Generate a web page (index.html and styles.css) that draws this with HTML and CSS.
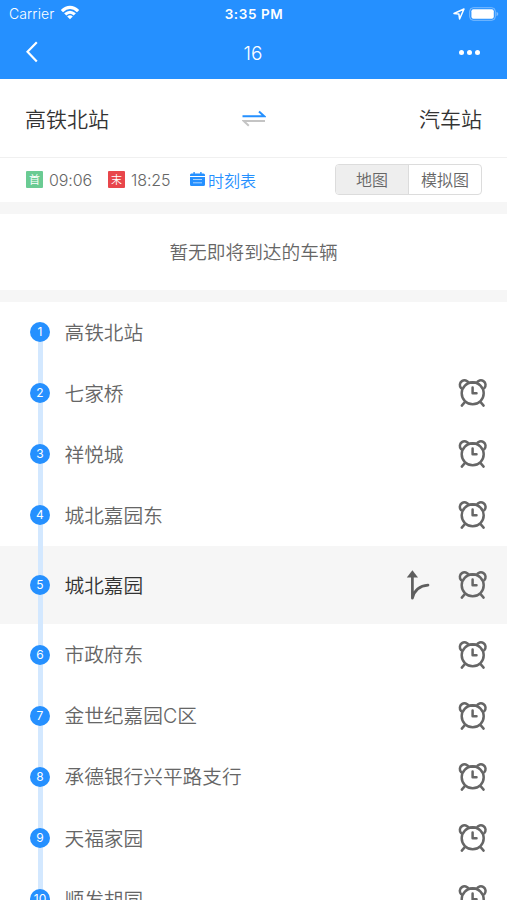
FILE: index.html
```html
<!DOCTYPE html>
<html lang="zh-CN">
<head>
<meta charset="UTF-8">
<meta name="viewport" content="width=device-width, initial-scale=1.0">
<title>16</title>
<link rel="stylesheet" href="styles.css">
</head>
<body>
<!-- shared icons -->
<svg class="sprite">
    <symbol id="clock" viewBox="0 0 30 30">
        <circle cx="14.7" cy="15.3" r="11"/>
        <path d="M3.1 10.2A4.7 4.7 0 1 1 10.8 5M18.6 5A4.7 4.7 0 1 1 26.3 10.2M10.5 4.7h8.4M14.6 9.4v5.9h3.9M6.6 24.4l-2.8 3.2M22.8 24.4l2.8 3.2"/>
    </symbol>
</svg>

<header class="header">
    <div class="status">
        <div class="status-left">
            <span>Carrier</span>
            <svg class="wifi" viewBox="0 0 20 15" width="20" height="15">
                <path d="M.8 5Q10-3.4 19.2 5L17 7.2Q10 1 3 7.2Z"/>
                <path d="M4.1 8.3Q10 3 15.9 8.3L13.7 10.4Q10 7.1 6.3 10.4Z"/>
                <path d="M7.2 11.4Q10 8.9 12.8 11.4L10 14.2Z"/>
            </svg>
        </div>
        <div class="status-time">3:35 PM</div>
        <div class="status-right">
            <svg class="location" viewBox="0 0 12 12" width="12" height="12"><path d="M1 5.5L11 1L6.6 11L5.9 6.1Z"/></svg>
            <svg viewBox="0 0 30 14" width="30" height="14">
                <rect x=".7" y=".7" width="25.6" height="12.6" rx="3.6" fill="none" stroke="#fff" stroke-opacity=".4"/>
                <rect x="2.4" y="2.3" width="22.4" height="9.4" rx="2" fill="#fff"/>
                <path d="M27.5 4.8q1.8.8 1.8 2.2t-1.8 2.2z" fill="#fff" opacity=".4"/>
            </svg>
        </div>
    </div>
    <div class="nav">
        <svg class="back" viewBox="0 0 12 22" width="12" height="22"><path d="M10.8 1.2L1.5 10.8L10.8 20.4"/></svg>
        <div class="nav-title">16</div>
        <div class="more"><i></i><i></i><i></i></div>
    </div>
</header>

<section class="route">
    <span class="route-from">高铁北站</span>
    <svg viewBox="0 0 24 18" width="24" height="18">
        <path d="M.5 7.3H22.2L17 2.5" stroke="#2590ff"/>
        <path d="M23 11.9H1.6L6.8 16.7" stroke="#c4c4c4"/>
    </svg>
    <span class="route-to">汽车站</span>
</section>

<section class="info">
    <span class="tag first">首</span><span class="time">09:06</span>
    <span class="tag last">末</span><span class="time">18:25</span>
    <a class="timetable">
        <svg viewBox="0 0 15 14" width="15" height="14">
            <path d="M1.5 1.5H13.5Q15 1.5 15 3V4H0V3Q0 1.5 1.5 1.5ZM3.4 0h1.4v2H3.4zM10.2 0h1.4v2h-1.4zM0 5H15V12.5Q15 14 13.5 14H1.5Q0 14 0 12.5Z"/>
            <path d="M3 7.5h9M3 10.8h9" stroke="#fff" stroke-opacity=".6"/>
        </svg><span>时刻表</span></a>
    <div class="switch">
        <span class="active">地图</span>
        <span>模拟图</span>
    </div>
</section>

<section class="notice">暂无即将到达的车辆</section>

<ul class="stops">
    <li><b class="num">1</b><span class="name">高铁北站</span></li>
    <li><b class="num">2</b><span class="name">七家桥</span><svg class="clock"><use href="#clock"/></svg></li>
    <li><b class="num">3</b><span class="name">祥悦城</span><svg class="clock"><use href="#clock"/></svg></li>
    <li><b class="num">4</b><span class="name">城北嘉园东</span><svg class="clock"><use href="#clock"/></svg></li>
    <li class="current"><b class="num">5</b><span class="name">城北嘉园</span>
        <svg class="branch" viewBox="0 0 24 30" width="24" height="30">
            <path d="M6.4 0.2L12 7.6H.8Z" fill="#5e5e5e"/>
            <path d="M6.4 6V28.2Q9.4 16.2 22 15.2"/>
        </svg>
        <svg class="clock"><use href="#clock"/></svg></li>
    <li><b class="num">6</b><span class="name">市政府东</span><svg class="clock"><use href="#clock"/></svg></li>
    <li><b class="num">7</b><span class="name">金世纪嘉园C区</span><svg class="clock"><use href="#clock"/></svg></li>
    <li><b class="num">8</b><span class="name">承德银行兴平路支行</span><svg class="clock"><use href="#clock"/></svg></li>
    <li><b class="num">9</b><span class="name">天福家园</span><svg class="clock"><use href="#clock"/></svg></li>
    <li><b class="num">10</b><span class="name">顺发胡同</span><svg class="clock"><use href="#clock"/></svg></li>
</ul>
</body>
</html>
```
FILE: styles.css
```css
:root{
    --blue:#2590ff;
    --line:#d3e8ff;
    --gray:#f6f6f6;
    --text:#666;
    --dark:#333;
}
*{
    box-sizing:border-box;
}
body{
    margin:0;
    height:900px;
    overflow:hidden;
    display:flex;
    flex-direction:column;
    background:#fff;
    color:var(--text);
    font-family:Inter, "Noto Sans CJK SC", sans-serif;
    font-weight:350;
}
.sprite{
    position:absolute;
    width:0;
    height:0;
}
.header{
    flex:none;
    height:79px;
    background:var(--blue);
    color:#fff;
}
.status{
    display:grid;
    grid-template-columns:1fr auto 1fr;
    align-items:center;
    height:27px;
    padding:0 8px 0 9px;
    font-size:14px;
}
.status-left{
    display:flex;
    align-items:center;
    gap:6px;
    letter-spacing:.1px;
}
.wifi{
    position:relative;
    top:-1px;
    fill:#fff;
}
.status-time{
    font-size:13.5px;
    font-weight:600;
    letter-spacing:.6px;
}
.status-right{
    display:flex;
    align-items:center;
    justify-content:flex-end;
    gap:4px;
}
.location{
    fill:none;
    stroke:#fff;
    stroke-width:1.5;
    stroke-linejoin:round;
}
.nav{
    display:grid;
    grid-template-columns:1fr auto 1fr;
    align-items:center;
    height:50px;
    padding:0 27px 0 26px;
}
.back{
    fill:none;
    stroke:#fff;
    stroke-width:2.2;
}
.nav-title{
    padding-top:2px;
    font-size:19px;
}
.more{
    display:flex;
    justify-content:flex-end;
    gap:3px;
}
.more i{
    width:5px;
    height:5px;
    border-radius:50%;
    background:#fff;
}
.route{
    flex:none;
    display:grid;
    grid-template-columns:1fr auto 1fr;
    align-items:center;
    height:79px;
    padding:0 25px;
    border-bottom:1px solid #f0f0f0;
    color:var(--dark);
    font-size:21px;
}
.route svg{
    fill:none;
    stroke-width:2;
}
.route-to{
    text-align:right;
}
.info{
    flex:none;
    display:flex;
    align-items:center;
    height:43.5px;
    padding:0 25px 0 26px;
    font-size:16px;
}
.tag{
    width:17px;
    height:17px;
    border-radius:1px;
    color:#fff;
    font-size:11px;
    line-height:19px;
    text-align:center;
}
.first{
    background:#6acb93;
}
.last{
    background:#e8464b;
}
.time{
    width:60px;
    padding-left:6px;
    letter-spacing:-.1px;
}
.time + .tag{
    margin-left:5px;
}
.last + .time{
    width:65px;
}
.timetable{
    display:flex;
    align-items:center;
    gap:3px;
    color:var(--blue);
}
.timetable svg{
    margin-bottom:2px;
    fill:var(--blue);
}
.switch{
    display:flex;
    width:147px;
    height:31px;
    margin-left:auto;
    border:1px solid #dcdcdc;
    border-radius:4px;
    overflow:hidden;
    line-height:31px;
    text-align:center;
}
.switch span{
    flex:1;
}
.switch .active{
    border-right:1px solid #dcdcdc;
    background:#eee;
}
.notice{
    flex:none;
    height:100px;
    border:solid var(--gray);
    border-width:12px 0;
    font-size:18.7px;
    line-height:77px;
    text-align:center;
}
.stops{
    flex:none;
    margin:0;
    padding:0;
    list-style:none;
}
.stops li{
    display:flex;
    align-items:center;
    height:61.15px;
    padding:0 19px 0 30px;
    /* vertical line behind the numbers */
    background:linear-gradient(var(--line),var(--line)) 37.5px 0/5px 100% no-repeat;
}
.stops li:first-child{
    background-position:37.5px 30px;
}
.stops .current{
    height:78px;
    background-color:var(--gray);
    color:var(--dark);
}
.num{
    width:20px;
    height:20px;
    border-radius:50%;
    background:var(--blue);
    color:#fff;
    font-size:12px;
    font-weight:400;
    line-height:20px;
    text-align:center;
}
.name{
    flex:1;
    margin-left:14.5px;
    padding-bottom:2px;
    font-size:19.7px;
}
.clock{
    width:30px;
    height:30px;
    fill:none;
    stroke:#666;
    stroke-width:2.5;
    stroke-linecap:round;
    stroke-linejoin:round;
}
.branch{
    margin-right:28px;
    fill:none;
    stroke:#5e5e5e;
    stroke-width:2.7;
    stroke-linecap:round;
    stroke-linejoin:round;
}
.branch path:first-child{
    stroke:none;
}
```
